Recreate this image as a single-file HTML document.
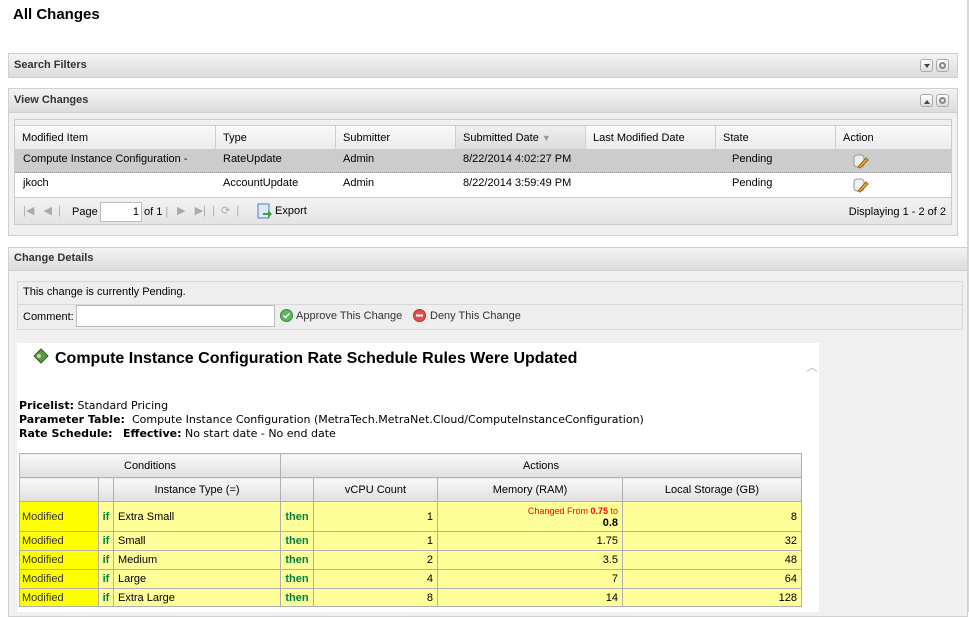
<!DOCTYPE html>
<html><head><style>
*{box-sizing:border-box;margin:0;padding:0}
body{width:969px;height:612px;overflow:hidden;background:#fff;font-family:"Liberation Sans",Arial,sans-serif;font-size:11px;color:#000;position:relative}
.a{position:absolute}
.ph{position:absolute;background:linear-gradient(#f4f4f4,#dcdcdc);border:1px solid #d0d0d0;font-weight:bold;color:#333;font-size:11px;padding:5px 0 0 5px;height:25px}
.panel{position:absolute;border:1px solid #d0d0d0;background:#f0f0f0}
.tb{position:absolute;width:13px;height:13px;border:1px solid #aaa;border-radius:3px;background:linear-gradient(#fff,#ddd)}
.gh{position:absolute;top:0;height:23px;border-right:1px solid #d0d0d0;padding:6px 0 0 7px;background:linear-gradient(#fafafa,#ececec)}
.c{position:absolute;white-space:nowrap}
table{border-collapse:collapse;table-layout:fixed;font-family:"Liberation Sans Narrow","Liberation Sans",Arial,sans-serif;font-size:11px}
td{border:1px solid #b0b0b0;padding:0 4px;white-space:nowrap;overflow:hidden}
.hd td{background:linear-gradient(#f8f8f8,#e0e0e0);text-align:center}
.r td{background:#ffff99}
.r td.m{background:#ffff00;color:#333;padding:0 2px}
.g{color:#008040;font-weight:bold;text-align:center;padding:0 2px!important}
.n{text-align:right}
</style></head><body>
<div class="a" style="left:13px;top:6px;font-size:15px;font-weight:bold">All Changes</div>
<div class="a" style="left:967px;top:0;width:2px;height:612px;background:#d8d8d8"></div>

<div class="ph" style="left:8px;top:53px;width:950px">Search Filters</div>
<div class="tb" style="left:920px;top:59px"><div class="a" style="left:3px;top:4px;border:3px solid transparent;border-top:4px solid #444"></div></div>
<div class="tb" style="left:936px;top:59px"><div class="a" style="left:2px;top:2px;width:7px;height:7px;border-radius:50%;border:2px solid #888"></div></div>

<div class="panel" style="left:8px;top:88px;width:950px;height:148px"></div>
<div class="ph" style="left:8px;top:88px;width:950px">View Changes</div>
<div class="tb" style="left:920px;top:94px"><div class="a" style="left:3px;top:2px;border:3px solid transparent;border-bottom:4px solid #444"></div></div>
<div class="tb" style="left:936px;top:94px"><div class="a" style="left:2px;top:2px;width:7px;height:7px;border-radius:50%;border:2px solid #888"></div></div>

<div class="a" style="left:14px;top:119px;width:938px;height:106px;border:1px solid #ccc;background:#fff">
 <div class="a" style="left:0;top:0;width:936px;height:6px;background:#f0f0f0;border-bottom:1px solid #ccc"></div>
 <div class="a" style="left:0;top:6px;width:936px;height:23px">
  <div class="gh" style="left:0;width:201px">Modified Item</div>
  <div class="gh" style="left:201px;width:120px">Type</div>
  <div class="gh" style="left:321px;width:120px">Submitter</div>
  <div class="gh" style="left:441px;width:130px;background:linear-gradient(#f0f0f0,#dcdcdc)">Submitted Date <span style="color:#999;font-size:9px">▼</span></div>
  <div class="gh" style="left:571px;width:130px">Last Modified Date</div>
  <div class="gh" style="left:701px;width:120px">State</div>
  <div class="gh" style="left:821px;width:115px;border-right:0">Action</div>
 </div>
 <div class="a" style="left:0;top:29px;width:936px;height:24px;background:#ccc;border-bottom:1px dotted #999"></div>
 <div class="c" style="left:8px;top:33px">Compute Instance Configuration -</div>
 <div class="c" style="left:208px;top:33px">RateUpdate</div>
 <div class="c" style="left:328px;top:33px">Admin</div>
 <div class="c" style="left:448px;top:33px">8/22/2014 4:02:27 PM</div>
 <div class="c" style="left:717px;top:33px">Pending</div>
 <div class="c" style="left:8px;top:57px">jkoch</div>
 <div class="c" style="left:208px;top:57px">AccountUpdate</div>
 <div class="c" style="left:328px;top:57px">Admin</div>
 <div class="c" style="left:448px;top:57px">8/22/2014 3:59:49 PM</div>
 <div class="c" style="left:717px;top:57px">Pending</div>
 <svg class="a" style="left:838px;top:33px" width="16" height="16"><rect x="1" y="2" width="10" height="12" rx="3" fill="#eee" stroke="#999"/><path d="M5 14 L13 5 L15 7 L7 15 Z" fill="#f0b030" stroke="#a06010"/></svg>
 <svg class="a" style="left:838px;top:57px" width="16" height="16"><rect x="1" y="2" width="10" height="12" rx="3" fill="#eee" stroke="#999"/><path d="M5 14 L13 5 L15 7 L7 15 Z" fill="#f0b030" stroke="#a06010"/></svg>
 <div class="a" style="left:0;top:77px;width:936px;height:27px;background:linear-gradient(#f2f2f2,#e4e4e4);border-top:1px solid #ccc"></div>
 <div class="c" style="left:8px;top:84px;color:#aaa;font-size:11px">|◀ &nbsp; ◀ &nbsp;|</div>
 <div class="c" style="left:57px;top:86px">Page</div>
 <div class="a" style="left:85px;top:82px;width:42px;height:20px;border:1px solid #bbb;background:#fff;text-align:right;padding:3px 2px 0 0">1</div>
 <div class="c" style="left:129px;top:86px">of 1 <span style="color:#aaa">|</span></div>
 <div class="c" style="left:162px;top:84px;color:#aaa;font-size:11px">▶ &nbsp; ▶| &nbsp;| &nbsp;⟳ &nbsp;|</div>
 <svg class="a" style="left:242px;top:83px" width="16" height="17"><rect x="1" y="1" width="11" height="14" fill="#dde8f8" stroke="#5080c0"/><path d="M6 10h5V7l4 4-4 4v-3H6z" fill="#40a040"/></svg>
 <div class="c" style="left:260px;top:85px">Export</div>
 <div class="c" style="right:5px;top:86px">Displaying 1 - 2 of 2</div>
</div>

<div class="panel" style="left:8px;top:247px;width:960px;height:370px"></div>
<div class="ph" style="left:8px;top:247px;width:960px;height:24px;padding-top:4px">Change Details</div>
<div class="a" style="left:17px;top:281px;width:946px;height:49px;border:1px solid #d8d8d8;background:#eee"></div>
<div class="a" style="left:17px;top:304px;width:946px;height:1px;background:#d8d8d8"></div>
<div class="c" style="left:23px;top:286px;font-size:11px">This change is currently Pending.</div>
<div class="c" style="left:23px;top:311px;font-size:11px">Comment:</div>
<div class="a" style="left:76px;top:305px;width:199px;height:22px;border:1px solid #bbb;background:#fff"></div>
<svg class="a" style="left:280px;top:309px" width="13" height="13"><circle cx="6.5" cy="6.5" r="6" fill="#5cb85c" stroke="#3a8a3a"/><path d="M3.5 6.5l2 2 4-4" stroke="#fff" stroke-width="1.5" fill="none"/></svg>
<div class="c" style="left:296px;top:310px;font-size:11px;color:#333">Approve This Change</div>
<svg class="a" style="left:413px;top:309px" width="13" height="13"><circle cx="6.5" cy="6.5" r="6" fill="#e05050" stroke="#b03030"/><rect x="3" y="5.5" width="7" height="2" fill="#fff"/></svg>
<div class="c" style="left:430px;top:310px;font-size:11px;color:#333">Deny This Change</div>

<div class="a" style="left:17px;top:343px;width:802px;height:269px;background:#fff"></div>
<div class="c" style="left:806px;top:358px;color:#bbb;font-size:12px">︿</div>
<svg class="a" style="left:33px;top:348px" width="16" height="16"><path d="M1 8L8 1l7 7-7 7z" fill="#5a9a40" stroke="#2f6020"/><circle cx="6" cy="8" r="2" fill="#ccc"/></svg>
<div class="c" style="left:55px;top:350px;font-size:16px;font-weight:bold;font-family:'Liberation Sans',sans-serif">Compute Instance Configuration Rate Schedule Rules Were Updated</div>
<div class="c" style="left:19px;top:399px;font-family:'DejaVu Sans',sans-serif;font-size:11px;line-height:14px"><b>Pricelist:</b> Standard Pricing<br><b>Parameter Table:</b>&nbsp; Compute Instance Configuration (MetraTech.MetraNet.Cloud/ComputeInstanceConfiguration)<br><b>Rate Schedule:</b>&nbsp;&nbsp; <b>Effective:</b> No start date - No end date</div>

<table class="a" style="left:19px;top:453px;width:783px">
<colgroup><col style="width:79px"><col style="width:15px"><col style="width:167px"><col style="width:33px"><col style="width:124px"><col style="width:185px"><col></colgroup>
<tr class="hd" style="height:24px"><td colspan="3">Conditions</td><td colspan="4">Actions</td></tr>
<tr class="hd" style="height:24px"><td></td><td></td><td>Instance Type (=)</td><td></td><td>vCPU Count</td><td>Memory (RAM)</td><td>Local Storage (GB)</td></tr>
<tr class="r" style="height:30px"><td class="m">Modified</td><td class="g">if</td><td>Extra Small</td><td class="g">then</td><td class="n">1</td><td class="n" style="line-height:12px"><span style="color:red;font-size:9px">Changed From <b>0.75</b> to</span><br><b>0.8</b></td><td class="n">8</td></tr>
<tr class="r" style="height:19px"><td class="m">Modified</td><td class="g">if</td><td>Small</td><td class="g">then</td><td class="n">1</td><td class="n">1.75</td><td class="n">32</td></tr>
<tr class="r" style="height:19px"><td class="m">Modified</td><td class="g">if</td><td>Medium</td><td class="g">then</td><td class="n">2</td><td class="n">3.5</td><td class="n">48</td></tr>
<tr class="r" style="height:19px"><td class="m">Modified</td><td class="g">if</td><td>Large</td><td class="g">then</td><td class="n">4</td><td class="n">7</td><td class="n">64</td></tr>
<tr class="r" style="height:18px"><td class="m">Modified</td><td class="g">if</td><td>Extra Large</td><td class="g">then</td><td class="n">8</td><td class="n">14</td><td class="n">128</td></tr>
</table>
</body></html>
